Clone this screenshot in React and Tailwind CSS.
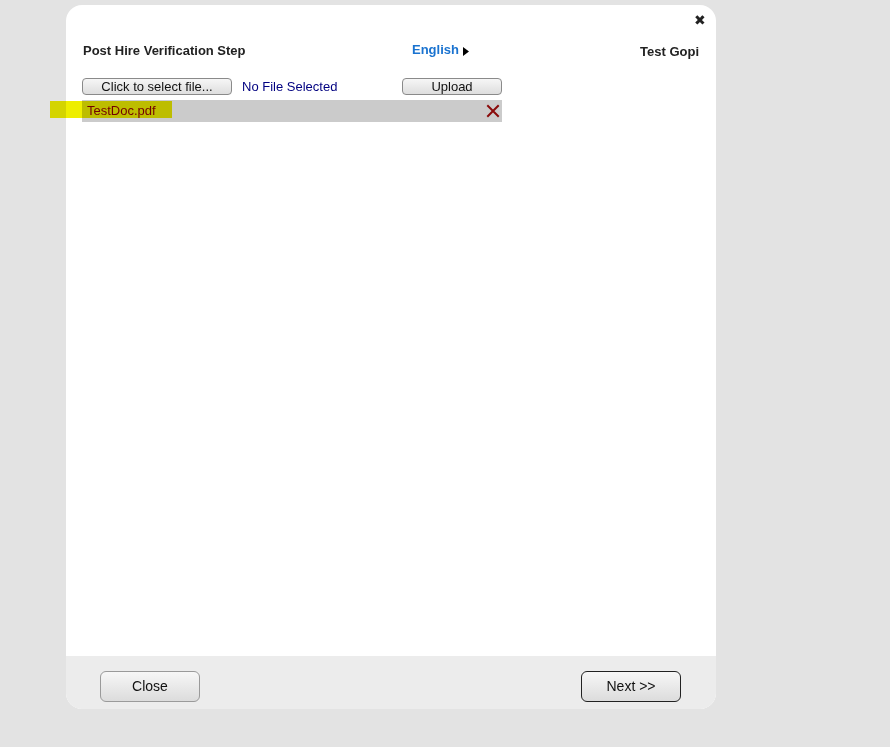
import React from "react";

function RemoveIcon() {
  return (
    <svg width="14" height="14" viewBox="0 0 14 14" className="block">
      <path d="M2 2 L12 12 M12 2 L2 12" stroke="#8a0a0a" strokeWidth="2" strokeLinecap="square" />
    </svg>
  );
}

export default function App() {
  const font = { fontFamily: '"Liberation Sans", Arial, sans-serif' };
  return (
    <div className="min-h-screen w-full bg-[#e3e3e3] pt-[5px]" style={font}>
      <div className="relative ml-[66px] flex h-[704px] w-[650px] flex-col overflow-visible rounded-[16px] bg-white">
        {/* close */}
        <button className="absolute right-[10px] top-[8px] text-[14px] leading-none text-[#222]">✖</button>

        {/* highlight marker over file name */}
        <div className="pointer-events-none absolute left-[-16px] top-[96px] h-[17px] w-[122px] bg-[#eeee00] mix-blend-multiply" />

        <div className="flex-1 px-[16px] pt-[35px]">
          {/* header */}
          <div className="flex items-start text-[13px] font-bold">
            <div className="w-[330px] pt-[1px] pl-[1px] text-[#222]">Post Hire Verification Step</div>
            <div className="flex items-center text-[#1a73d0]">
              <span>English</span>
              <svg width="6" height="9" viewBox="0 0 6 9" className="ml-[4px] mt-[4px]">
                <path d="M0 0 L6 4.5 L0 9 Z" fill="#000" />
              </svg>
            </div>
            <div className="ml-auto mr-[1px] pt-[2px] text-[#222]">Test Gopi</div>
          </div>

          {/* file picker row */}
          <div className="mt-[15px] flex items-center text-[13px]">
            <button className="h-[17px] w-[150px] rounded-[4px] border border-[#8a8a8a] bg-gradient-to-b from-[#f6f6f6] to-[#dedede] leading-[15px] text-[#111]">
              Click to select file...
            </button>
            <span className="ml-[10px] text-[#000080]">No File Selected</span>
            <button className="ml-auto mr-[198px] h-[17px] w-[100px] rounded-[4px] border border-[#8a8a8a] bg-gradient-to-b from-[#f6f6f6] to-[#dedede] leading-[15px] text-[#111]">
              Upload
            </button>
          </div>

          {/* uploaded file */}
          <div className="mt-[4px] flex h-[22px] w-[420px] items-center bg-[#cbcbcb] pl-[5px] pr-[2px] text-[13px] text-[#7a0000]">
            <span>TestDoc.pdf</span>
            <span className="ml-auto">
              <RemoveIcon />
            </span>
          </div>
        </div>

        {/* footer */}
        <div className="flex h-[53px] items-start justify-between rounded-b-[16px] bg-[#ececec] px-[34px] pt-[15px]">
          <button className="h-[31px] w-[100px] rounded-[6px] border border-[#9a9a9a] bg-gradient-to-b from-[#f7f7f7] to-[#dcdcdc] text-[14px] text-[#111]">
            Close
          </button>
          <button className="mr-[1px] h-[31px] w-[100px] rounded-[6px] border border-[#222] bg-gradient-to-b from-[#f7f7f7] to-[#dcdcdc] text-[14px] text-[#111]">
            Next &gt;&gt;
          </button>
        </div>
      </div>
    </div>
  );
}
